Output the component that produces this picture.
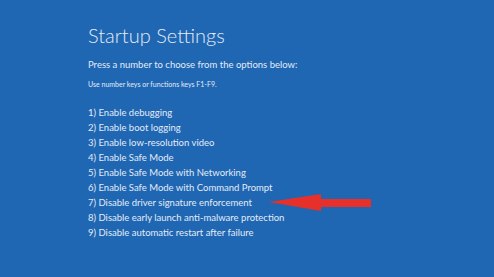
const options = [
  "Enable debugging",
  "Enable boot logging",
  "Enable low-resolution video",
  "Enable Safe Mode",
  "Enable Safe Mode with Networking",
  "Enable Safe Mode with Command Prompt",
  "Disable driver signature enforcement",
  "Disable early launch anti-malware protection",
  "Disable automatic restart after failure",
];

function Arrow() {
  return (
    <svg
      className="absolute left-[269px] top-[194px]"
      width="103"
      height="18"
      viewBox="0 0 103 18"
    >
      <polygon
        points="0,8 52,0 52,5 102,5 102,13 52,13 52,17"
        fill="#e8302a"
      />
    </svg>
  );
}

export default function App() {
  return (
    <div className="relative w-[494px] h-[277px] overflow-hidden bg-[#1f66b3] text-[#e3ecf7] font-['Lato',sans-serif]">
      <div className="pl-[88px] pt-[20px]">
        <h1 className="text-[20px] font-light leading-[30px]">
          Startup Settings
        </h1>
        <p className="mt-[8px] text-[9.5px] leading-[14px]">
          Press a number to choose from the options below:
        </p>
        <p className="mt-[7px] text-[7px] leading-[10px]">
          Use number keys or functions keys F1-F9.
        </p>
        <ul className="mt-[16px]">
          {options.map((o, i) => (
            <li key={o} className="text-[9.5px] leading-[15px]">
              {i + 1}) {o}
            </li>
          ))}
        </ul>
      </div>
      <Arrow />
    </div>
  );
}
